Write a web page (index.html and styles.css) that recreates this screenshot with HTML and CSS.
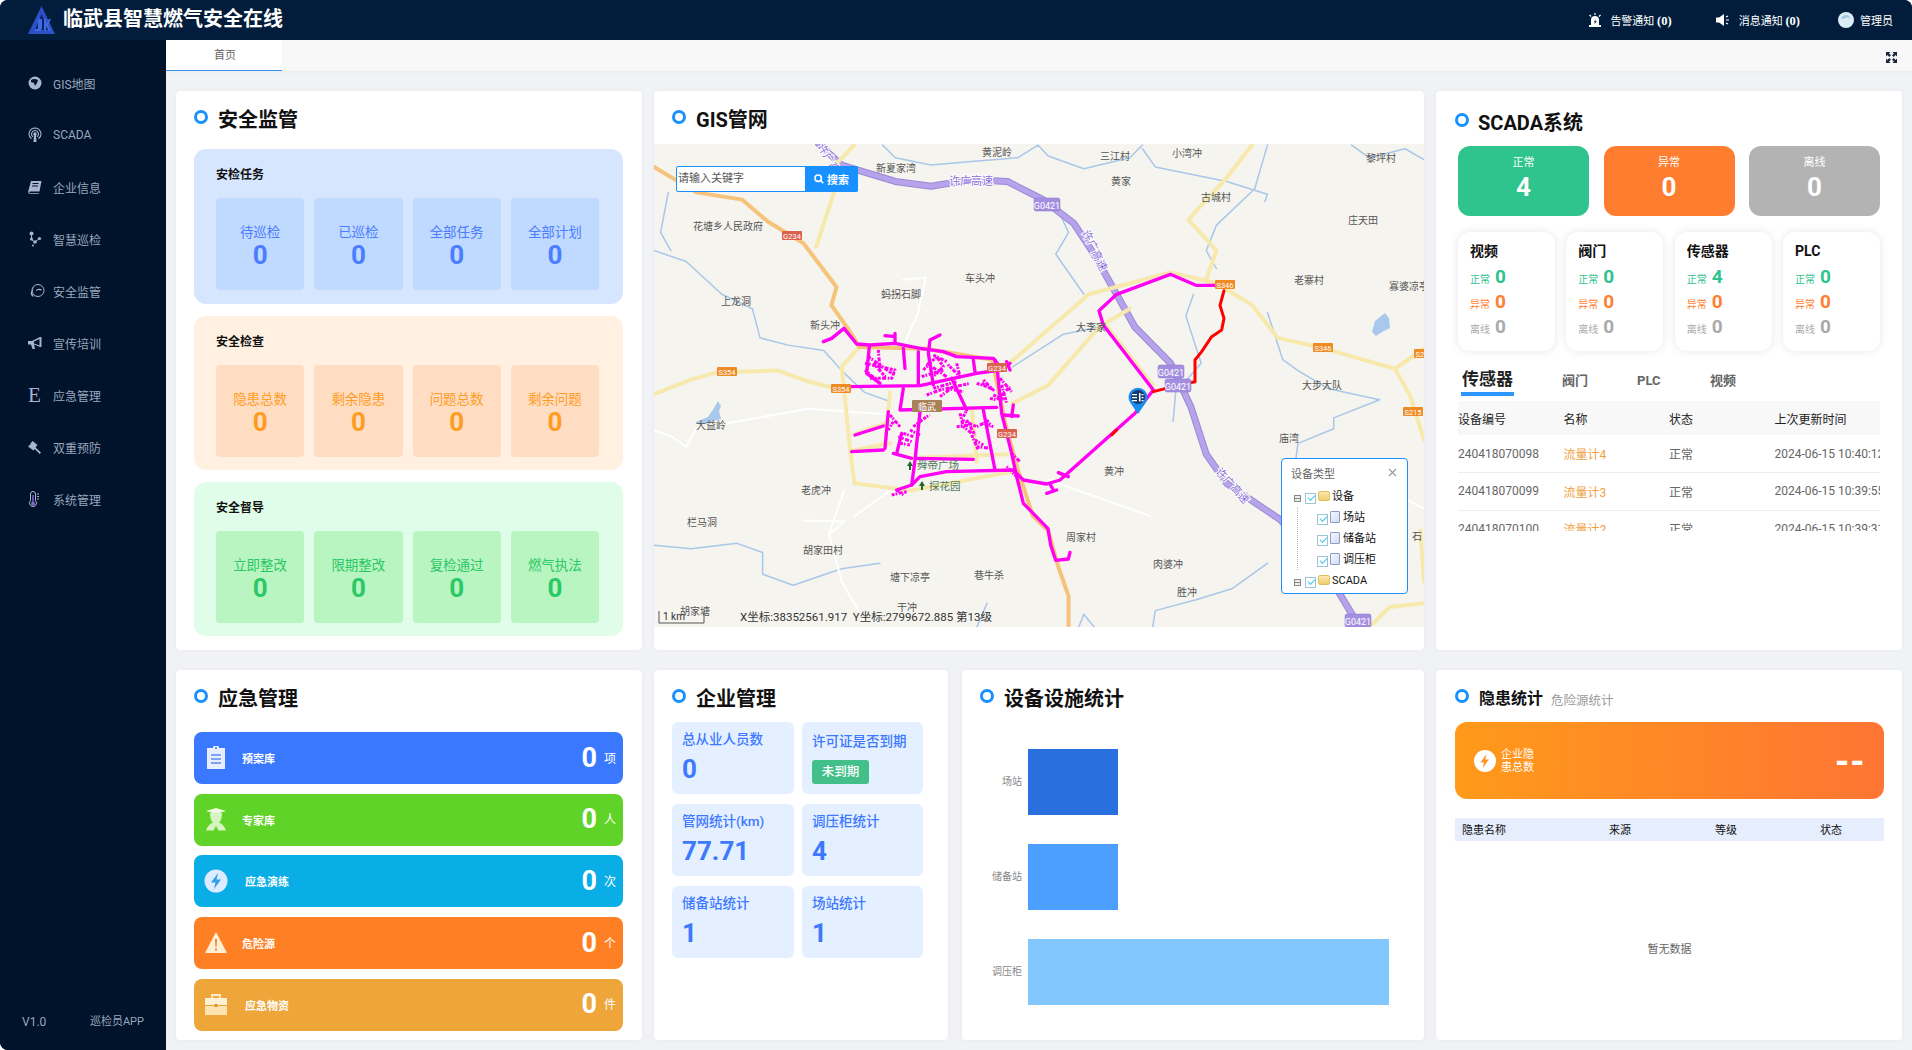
FILE: index.html
```html
<!DOCTYPE html>
<html lang="zh-CN">
<head>
<meta charset="utf-8">
<title>临武县智慧燃气安全在线</title>
<link rel="stylesheet" href="styles.css">
</head>
<body>
<div class="app">
  <header class="topbar">
    <svg class="logo" viewBox="0 0 27 28"><path d="M13.5 0 27 28H0Z" fill="#2b50c8"/><path d="M13.5 8 20 24H7Z" fill="#0d2660"/><path d="M10 13h4v9q0 3-4 3H7v-2h2q1 0 1-1ZM16 13h2v5l3-5h2l-3 6 3 6h-2l-3-5v5h-2Z" fill="#3f6ae6"/></svg>
    <h1 class="brand">临武县智慧燃气安全在线</h1>
    <div class="top-right">
      <div class="top-item">
        <svg class="top-icon" viewBox="0 0 14 14"><path d="M3 13V7a4 4 0 0 1 8 0v6Z" fill="#fff"/><path d="M7.8 6 5.8 9.200h1.400L6.400 11.500 8.800 8.300H7.200Z" fill="#021d3b"/><rect x="1" y="12" width="12" height="2" fill="#fff"/><path d="M7 0v2M1.500 2 3 3.500M12.500 2 11 3.500" stroke="#fff" stroke-width="1.200"/></svg>
        <span>告警通知 <b class="count">(0)</b></span>
      </div>
      <div class="top-item top-item-msg">
        <svg class="top-icon top-icon-wide" viewBox="0 0 15 14"><path d="M0 4.500h3L8 1v12L3 9.500H0Z" fill="#fff"/><path d="M10 4 12 3M10 7h3M10 10 12 11" stroke="#fff" stroke-width="1.200"/></svg>
        <span>消息通知 <b class="count">(0)</b></span>
      </div>
      <div class="top-item top-item-user">
        <svg class="avatar" viewBox="0 0 16 16"><circle cx="8" cy="8" r="8" fill="#dcecf6"/><path d="M3.500 7a4.500 4 0 0 1 9 0q-2-2.500-4-1.500T3.500 7Z" fill="#9fc8e4"/></svg>
        <span>管理员</span>
      </div>
    </div>
  </header>

  <div class="body-row">
    <aside class="sidebar">
      <nav class="menu">
        <a class="menu-item"><svg class="menu-icon" viewBox="0 0 14 14"><circle cx="7" cy="7" r="6.500"/><path d="M3 4q3-2 7 0l-1 3-2 3-1-3-3-1Z" class="cut"/></svg>GIS地图</a>
        <a class="menu-item"><svg class="menu-icon" viewBox="0 0 14 16"><path d="M7 1a6 6 0 0 0-3.500 10.800M7 1a6 6 0 0 1 3.500 10.800M7 3.500a3.500 3.500 0 0 0-2 6.300M7 3.500a3.500 3.500 0 0 1 2 6.300" fill="none" stroke="#a8b4d0" stroke-width="1.100"/><circle cx="7" cy="7" r="1.800"/><path d="M6 8h2l.5 7h-3Z"/></svg>SCADA</a>
        <a class="menu-item"><svg class="menu-icon" viewBox="0 0 14 14"><path d="M3 1h10.500L11.500 11.500H2.500Q1 11.500 1.300 13H11l-.3.800H1.500Q-.2 13.500.3 11Z"/><path d="M4.500 3.500h6M4 6h6" stroke="#00132a" stroke-width="1"/></svg>企业信息</a>
        <a class="menu-item"><svg class="menu-icon" viewBox="0 0 14 16"><circle cx="3.500" cy="2.500" r="2"/><circle cx="3.500" cy="8" r="1.600"/><circle cx="7" cy="11" r="1.800"/><circle cx="11.500" cy="7.500" r="1.600"/><circle cx="5" cy="14.500" r="1"/><path d="M3.500 4v3M4 9l2 1.500M8 10l3-2" stroke="#a8b4d0" fill="none"/></svg>智慧巡检</a>
        <a class="menu-item"><svg class="menu-icon menu-icon-earth" viewBox="0 0 16 16"><circle cx="9" cy="7.500" r="6" fill="none" stroke="#a8b4d0" stroke-width="1"/><path d="M5 3 2 9q-1 4 3 5l-2-4ZM7 7q3-2 6-.5l-1 1q-3-1-5 .5Z"/></svg>安全监管</a>
        <a class="menu-item"><svg class="menu-icon" viewBox="0 0 14 14"><path d="M0 5h4l8-4h1.500v10H12L6 8.500l1 4.500H4.500L3 8.500H0ZM6 5.500v2l5.500 2V3Z" fill-rule="evenodd"/></svg>宣传培训</a>
        <a class="menu-item"><span class="menu-letter">E</span>应急管理</a>
        <a class="menu-item"><svg class="menu-icon" viewBox="0 0 14 14"><path d="M4.500 1 9.500 5 7.500 7.500 8 8l5 4.500-1.300 1.500L6.800 9 5.500 10.500 0 6.500 1.500 5l.8-.2.200-1.300Z"/></svg>双重预防</a>
        <a class="menu-item"><svg class="menu-icon" viewBox="0 0 14 16"><path d="M5 .5a2.500 2.500 0 0 1 2.500 2.500v6.700a3.500 3.500 0 1 1-5 0V3A2.500 2.500 0 0 1 5 .5Z" fill="none" stroke="#a8b4d0" stroke-width="1"/><path d="M4.300 4h1.400v7a2 2 0 1 1-1.400 0Z" fill="#8a6ad0"/><path d="M9 3h2M9 5.500h2M9 8h2" stroke="#a8b4d0"/></svg>系统管理</a>
      </nav>
      <div class="side-foot"><span>V1.0</span><span class="side-app">巡检员APP</span></div>
    </aside>

    <div class="main">
      <div class="tabs-bar">
        <div class="tab-active">首页</div>
        <svg class="expand" viewBox="0 0 11 11"><path d="M0 0h4.500L3.100 1.400 5 3.300 3.300 5 1.400 3.100 0 4.500ZM11 0v4.500L9.600 3.100 7.700 5 6 3.300 7.900 1.400 6.500 0ZM0 11V6.500l1.400 1.400L3.300 6 5 7.700 3.100 9.600 4.500 11ZM11 11H6.500l1.400-1.400L6 7.700 7.700 6l1.900 1.900L11 6.500Z" fill="#1b2740"/></svg>
      </div>

      <div class="content">
        <div class="row row-top">
          <section class="card card-safety">
            <div class="head"><i class="dot"></i><h2>安全监管</h2></div>
            <div class="panel panel-blue">
              <h3>安检任务</h3>
              <div class="tiles">
                <div class="tile"><span>待巡检</span><b>0</b></div>
                <div class="tile"><span>已巡检</span><b>0</b></div>
                <div class="tile"><span>全部任务</span><b>0</b></div>
                <div class="tile"><span>全部计划</span><b>0</b></div>
              </div>
            </div>
            <div class="panel panel-orange">
              <h3>安全检查</h3>
              <div class="tiles">
                <div class="tile"><span>隐患总数</span><b>0</b></div>
                <div class="tile"><span>剩余隐患</span><b>0</b></div>
                <div class="tile"><span>问题总数</span><b>0</b></div>
                <div class="tile"><span>剩余问题</span><b>0</b></div>
              </div>
            </div>
            <div class="panel panel-green">
              <h3>安全督导</h3>
              <div class="tiles">
                <div class="tile"><span>立即整改</span><b>0</b></div>
                <div class="tile"><span>限期整改</span><b>0</b></div>
                <div class="tile"><span>复检通过</span><b>0</b></div>
                <div class="tile"><span>燃气执法</span><b>0</b></div>
              </div>
            </div>
          </section>

          <section class="card card-gis">
            <div class="head head-gis"><i class="dot"></i><h2>GIS管网</h2></div>
            <div class="map">
              <svg class="map-layer map-roads" viewBox="27 177 1510 1328" preserveAspectRatio="none">
                <g class="river">
                  <path d="M475 180 500 215 570 235 650 225 740 215 780 180 800 210 870 245 960 215 985 180"/>
                  <path d="M985 190 1010 240 1080 260 1150 280 1230 315 1225 335"/>
                  <path d="M27 470 90 500 160 590 220 630 235 710 290 730 360 745 395 800 440 860 490 885"/>
                  <path d="M55 310 40 420 60 470"/>
                  <path d="M27 1280 100 1290 190 1275 240 1300 240 1360 300 1390 395 1345 470 1330"/>
                  <path d="M1230 180 1205 300 1130 400 1110 470 1130 520"/>
                  <path d="M1085 590 1070 650 1100 780 1050 860 1045 940"/>
                  <path d="M1230 640 1260 770 1290 800 1350 850 1450 880 1360 930 1360 960 1290 1000 1285 1050"/>
                  <path d="M1005 1505 1010 1460 1090 1430 1160 1400 1230 1330"/>
                  <path d="M1395 180 1430 215 1500 190 1537 220"/>
                  <path d="M815 480 840 420 820 360M815 480 870 590"/>
                  <path d="M660 1505 680 1440M860 1505 870 1470 890 1505"/>
                  <path d="M730 790 830 700 900 680"/>
                </g>
                <g class="minor">
                  <path d="M515 550 560 545 545 640 520 720"/>
                  <path d="M320 1212 400 1215 370 1250 395 1380 440 1490"/>
                  <path d="M400 1130 370 1250M490 1130 420 1200"/>
                  <path d="M27 965 60 980 90 1010 110 960 330 905 480 920"/>
                  <path d="M800 1100 1000 1200"/>
                  <path d="M1420 1090 1537 1180"/>
                </g>
                <g class="highway-edge"><path d="M350 177 395 235 430 250 500 280 570 293 650 275 720 280 790 330 850 395 890 480 930 580 970 680 1040 780 1080 900 1110 1030 1150 1110 1255 1210 1340 1340 1400 1480 1420 1505"/></g>
                <g class="highway"><path d="M350 177 395 235 430 250 500 280 570 293 650 275 720 280 790 330 850 395 890 480 930 580 970 680 1040 780 1080 900 1110 1030 1150 1110 1255 1210 1340 1340 1400 1480 1420 1505"/></g>
                <g class="yellow">
                  <path d="M27 865 100 825 150 805 270 800 330 830 400 855"/>
                  <path d="M400 855 395 790 430 735"/>
                  <path d="M400 855 410 1000 420 1110 530 1130 740 1075"/>
                  <path d="M490 860 480 1000M650 905 660 1050M420 975 480 945M415 1020 490 1000M530 1040 720 1030"/>
                  <path d="M720 785 880 590 1040 530 1130 560 1200 620 1250 710 1330 735 1480 795 1510 870 1537 990"/>
                  <path d="M730 890 800 840 900 680 960 630"/>
                  <path d="M910 670 1005 840"/>
                  <path d="M1480 795 1537 740"/>
                  <path d="M1110 550 1130 470 1075 385 1150 270 1200 180"/>
                  <path d="M1430 1505 1470 1450 1537 1440"/>
                  <path d="M1530 1240 1537 1380"/>
                  <path d="M345 460 380 310 385 230 420 180"/>
                </g>
                <g class="orange-road">
                  <path d="M27 240 110 310 200 330 250 390 320 450 385 570 375 620 410 690 430 735 560 740 690 770 715 940 740 1070 770 1200 800 1240 820 1340 840 1420 840 1505"/>
                </g>
              </svg>
              <svg class="map-layer" viewBox="-498 -528 2310 1449">
                <g class="pipe">
                  <path d="M10 65 35 55 72 25 110 72 150 75 225 70 300 85 370 95 410 110 520 115 540 140"/>
                  <path d="M90 200 300 197 400 175 470 160 540 150 570 130"/>
                  <path d="M148 80 140 160 180 190M295 95 295 195M250 85 255 145M330 60 325 100 340 195M225 40 225 70M195 47 225 50M330 60 360 45"/>
                  <path d="M250 205 240 270 530 262"/>
                  <path d="M300 275 285 420 275 495"/>
                  <path d="M395 175 440 270M490 270 525 450"/>
                  <path d="M530 130 545 280 575 400 590 470 610 550 684 626 692 675 707 721 745 717 750 697"/>
                  <path d="M290 415 460 418"/>
                  <path d="M230 510 275 495 300 470 380 455 580 450 610 480 680 492 720 480 945 280 1000 210 850 15 837 -28 890 -77 1051 -137 1128 -104 1212 -104"/>
                  <path d="M105 345 190 318M95 395 190 390M205 275 195 385M220 400 275 415M245 340 230 400"/>
                  <path d="M680 520 710 510M715 458 745 470M690 492 700 510M550 285 595 288M580 255 575 290M460 120 465 155M525 120 530 150M560 125 570 150"/>
                </g>
                <g class="pipe pipe-dots">
                  <path d="M135 130 225 150 215 175 150 175M175 90 180 150M145 110 215 160M160 130 200 175M135 150 170 180"/>
                  <path d="M310 150 350 110 370 140 340 170M320 130 380 170M340 105 380 125M305 170 370 150"/>
                  <path d="M320 225 360 210 450 190M340 205 410 185M380 205 430 215M360 230 400 200"/>
                  <path d="M485 190 520 210 490 180M510 235 530 240 570 200M540 175 575 215M520 225 555 240M545 195 560 250"/>
                  <path d="M425 300 470 320 490 310 520 320M420 280 430 320 455 340M410 320 450 315M440 300 465 345M430 290 440 270"/>
                  <path d="M470 380 510 385M465 360 490 375M455 345 475 390M500 300 515 320"/>
                  <path d="M240 370 270 375M250 340 280 350M280 320 320 290 330 285M235 350 275 365M270 330 300 345M210 285 240 320M220 305 205 330"/>
                  <path d="M230 510 250 525M215 525 260 515M410 130 420 170 380 130M470 190 500 200"/>
                  <path d="M575 400 600 425M590 470 560 440"/>
                </g>
                <g class="pipe pipe-red">
                  <path d="M875 345 890 330M1000 215 1090 192 1125 185 1125 120 1145 95 1175 50 1205 30 1212 -5 1200 -44 1212 -88"/>
                </g>
              </svg>
              <svg class="map-layer map-text" viewBox="0 0 770 483">
                <path class="lake" d="M718 188l3-11 10-8 4 5 1 10-8 4-6 4ZM42 278l12-5 6-9 4-7 3 5-2 5 2 8-7 2-8 3-10 0Z"/>
                <g class="shield sh-p"><rect x="380" y="54" width="26" height="13" rx="2"/><text x="393" y="64.500">G0421</text></g>
                <g class="shield sh-p"><rect x="504" y="221" width="26" height="13" rx="2"/><text x="517" y="231.500">G0421</text></g>
                <g class="shield sh-p"><rect x="511" y="235" width="26" height="13" rx="2"/><text x="524" y="245.500">G0421</text></g>
                <g class="shield sh-p"><rect x="691" y="470" width="26" height="13" rx="2"/><text x="704" y="480.500">G0421</text></g>
                <g class="shield sh-r"><rect x="128" y="87" width="20" height="9" rx="1"/><text x="138" y="94.500">G234</text></g>
                <g class="shield sh-r"><rect x="343" y="285" width="20" height="9" rx="1"/><text x="353" y="292.500">G234</text></g>
                <g class="shield sh-r"><rect x="333" y="219" width="20" height="9" rx="1"/><text x="343" y="226.500">G234</text></g>
                <g class="shield sh-o"><rect x="63" y="223" width="20" height="9" rx="1"/><text x="73" y="230.500">S354</text></g>
                <g class="shield sh-o"><rect x="177" y="240" width="20" height="9" rx="1"/><text x="187" y="247.500">S354</text></g>
                <g class="shield sh-o"><rect x="561" y="136" width="20" height="9" rx="1"/><text x="571" y="143.500">S346</text></g>
                <g class="shield sh-o"><rect x="659" y="199" width="20" height="9" rx="1"/><text x="669" y="206.500">S346</text></g>
                <g class="shield sh-o"><rect x="749" y="263" width="20" height="9" rx="1"/><text x="759" y="270.500">S215</text></g>
                <g class="shield sh-o"><rect x="760" y="205" width="20" height="9" rx="1"/><text x="770" y="212.500">S215</text></g>
                <g class="shield sh-b"><rect x="258" y="256" width="30" height="12" rx="1"/><text x="273" y="265.500">临武</text></g>
                <text class="hw-label" x="295" y="41">许广高速</text>
                <text class="hw-label" transform="translate(428 88) rotate(65)">许广高速</text>
                <text class="hw-label" transform="translate(561 328) rotate(48)">许广高速</text>
                <text class="hw-label" transform="translate(163 2) rotate(60)">许广高速</text>
                <g class="place">
                  <text x="328" y="12">黄泥岭</text><text x="446" y="16">三江村</text><text x="518" y="13">小湾冲</text><text x="712" y="18">黎坪村</text>
                  <text x="222" y="28">新夏家湾</text><text x="457" y="41">黄家</text><text x="547" y="57">古城村</text><text x="694" y="80">庄天田</text>
                  <text x="39" y="86">花塘乡人民政府</text><text x="311" y="138">车头冲</text><text x="227" y="154">蚂拐石脚</text><text x="640" y="140">老寨村</text>
                  <text x="735" y="146">寡婆凉亭</text><text x="67" y="161">上龙洞</text><text x="156" y="185">新头冲</text><text x="422" y="187">大李家</text>
                  <text x="648" y="245">大步大队</text><text x="42" y="285">大益岭</text><text x="625" y="298">庙湾</text><text x="450" y="331">黄冲</text>
                  <text x="147" y="350">老虎冲</text><text x="33" y="382">栏马洞</text><text x="412" y="397">周家村</text><text x="149" y="410">胡家田村</text>
                  <text x="236" y="437">塘下凉亭</text><text x="320" y="435">巷牛杀</text><text x="499" y="424">肉婆冲</text><text x="523" y="452">胜冲</text>
                  <text x="243" y="467">干冲</text><text x="26" y="471">胡家塘</text><text x="758" y="396">石</text>
                </g>
                <g class="park"><text x="263" y="325">舜帝广场</text><text x="275" y="346">探花园</text><path d="M256 317l3 5h-2v4h-2v-4h-2ZM268 337l3 5h-2v4h-2v-4h-2Z"/></g>
                <path class="scale" d="M5 467v12h45v-12"/>
                <text class="scale-text" x="9" y="476">1 km</text>
                <text class="coord" x="86" y="477">X坐标:38352561.917 &#160;Y坐标:2799672.885 第13级</text>
                <path class="pin" d="M484 270l-7.500-11a9.500 9.500 0 1 1 15 0Z"/>
                <circle class="pin-in" cx="484" cy="253" r="7"/>
                <path class="pin-mark" d="M478 250h5v1.200h-5ZM478 253h5v1.200h-5ZM478 256h5v1.200h-5ZM485 249h1.500v8.500H485ZM487.500 250h2v1.200h-2ZM487.500 253h2v1.200h-2ZM487.500 256h2v1.200h-2Z"/>
              </svg>
              <div class="search">
                <span class="search-input">请输入关键字</span>
                <span class="search-btn"><svg class="search-icon" viewBox="0 0 10 10"><circle cx="4.200" cy="4.200" r="3.200" fill="none" stroke="#fff" stroke-width="1.600"/><path d="M6.500 6.500 9.300 9.300" stroke="#fff" stroke-width="1.600"/></svg>搜索</span>
              </div>
              <div class="tree">
                <div class="tree-head"><span>设备类型</span><svg class="tree-close" viewBox="0 0 9 9"><path d="M1 1 8 8M8 1 1 8" stroke="#999" stroke-width="1.100"/></svg></div>
                <div class="tree-row"><i class="toggle"></i><i class="check"></i><i class="folder"></i>设备</div>
                <div class="tree-kids">
                  <div class="tree-row"><i class="check"></i><i class="file"></i>场站</div>
                  <div class="tree-row"><i class="check"></i><i class="file"></i>储备站</div>
                  <div class="tree-row"><i class="check"></i><i class="file"></i>调压柜</div>
                </div>
                <div class="tree-row"><i class="toggle"></i><i class="check"></i><i class="folder"></i>SCADA</div>
              </div>
            </div>
          </section>

          <section class="card card-scada">
            <div class="head head-scada"><i class="dot"></i><h2>SCADA系统</h2></div>
            <div class="status-row">
              <div class="status st-green"><span>正常</span><b>4</b></div>
              <div class="status st-orange"><span>异常</span><b>0</b></div>
              <div class="status st-gray"><span>离线</span><b>0</b></div>
            </div>
            <div class="kinds">
              <div class="kind"><h4>视频</h4><p class="k-ok">正常<b>0</b></p><p class="k-bad">异常<b>0</b></p><p class="k-off">离线<b>0</b></p></div>
              <div class="kind"><h4>阀门</h4><p class="k-ok">正常<b>0</b></p><p class="k-bad">异常<b>0</b></p><p class="k-off">离线<b>0</b></p></div>
              <div class="kind"><h4>传感器</h4><p class="k-ok">正常<b>4</b></p><p class="k-bad">异常<b>0</b></p><p class="k-off">离线<b>0</b></p></div>
              <div class="kind"><h4>PLC</h4><p class="k-ok">正常<b>0</b></p><p class="k-bad">异常<b>0</b></p><p class="k-off">离线<b>0</b></p></div>
            </div>
            <div class="s-tabs">
              <span class="s-tab s-tab-on">传感器</span>
              <span class="s-tab s-tab-valve">阀门</span>
              <span class="s-tab s-tab-plc">PLC</span>
              <span class="s-tab s-tab-video">视频</span>
            </div>
            <div class="s-table-wrap">
              <table class="s-table">
                <thead><tr><th>设备编号</th><th>名称</th><th>状态</th><th>上次更新时间</th></tr></thead>
                <tbody>
                  <tr><td>240418070098</td><td class="name">流量计4</td><td>正常</td><td>2024-06-15 10:40:12</td></tr>
                  <tr><td>240418070099</td><td class="name">流量计3</td><td>正常</td><td>2024-06-15 10:39:55</td></tr>
                  <tr><td>240418070100</td><td class="name">流量计2</td><td>正常</td><td>2024-06-15 10:39:31</td></tr>
                </tbody>
              </table>
            </div>
          </section>
        </div>

        <div class="row row-bottom">
          <section class="card card-emergency">
            <div class="head"><i class="dot"></i><h2>应急管理</h2></div>
            <div class="bars">
              <div class="bar bar-blue">
                <svg class="bar-icon" viewBox="0 0 24 26"><path d="M3 3h18v21H3Z" fill="#e6eeff"/><rect x="9" y="1" width="6" height="4" rx="1" fill="#e6eeff"/><circle cx="12" cy="3" r="1" fill="#3a78ff"/><path d="M7 10h10M7 14h10M7 18h10" stroke="#5b8cf0" stroke-width="1.600"/></svg>
                <span class="bar-label">预案库</span><b>0</b><em>项</em>
              </div>
              <div class="bar bar-green">
                <svg class="bar-icon" viewBox="0 0 24 26"><path d="M2 4 12 1l10 3-10 3Z" fill="#eefbe0"/><path d="M6 6h12q0 7-3 9.500 5 2 7 8H14.500L12 19l-2.500 4.500H2q2-6 7-8Q6 13 6 6Z" fill="#d6f5c0"/></svg>
                <span class="bar-label">专家库</span><b>0</b><em>人</em>
              </div>
              <div class="bar bar-sky">
                <svg class="bar-icon" viewBox="0 0 24 26"><circle cx="12" cy="13" r="11.500" fill="#dcebff"/><path d="M14 5 7 14.500h4.500L10 21l7-9.500h-4.500Z" fill="#2c9fe8"/></svg>
                <span class="bar-label bar-label-in">应急演练</span><b>0</b><em>次</em>
              </div>
              <div class="bar bar-orange">
                <svg class="bar-icon" viewBox="0 0 24 26"><path d="M12 2 23 23H1Z" fill="#ffefd2"/><path d="M11 9h2l-.4 8h-1.200ZM11 18.500h2v2h-2Z" fill="#f0813a"/></svg>
                <span class="bar-label">危险源</span><b>0</b><em>个</em>
              </div>
              <div class="bar bar-amber">
                <svg class="bar-icon" viewBox="0 0 24 26"><path d="M8 6V3h8v3" fill="none" stroke="#fdeecb" stroke-width="1.800"/><path d="M1 6h22v7H1Z" fill="#fff2d4"/><path d="M1 14h22v9H1Z" fill="#fde3b0"/><rect x="10.500" y="12" width="3" height="3" fill="#d99030"/></svg>
                <span class="bar-label bar-label-in">应急物资</span><b>0</b><em>件</em>
              </div>
            </div>
          </section>

          <section class="card card-company">
            <div class="head head-short"><i class="dot"></i><h2>企业管理</h2></div>
            <div class="co-grid">
              <div class="co-tile"><span>总从业人员数</span><b>0</b></div>
              <div class="co-tile"><span class="co-label-low">许可证是否到期</span><em class="tag">未到期</em></div>
              <div class="co-tile"><span>管网统计(km)</span><b>77.71</b></div>
              <div class="co-tile"><span>调压柜统计</span><b>4</b></div>
              <div class="co-tile"><span>储备站统计</span><b>1</b></div>
              <div class="co-tile"><span>场站统计</span><b>1</b></div>
            </div>
          </section>

          <section class="card card-device">
            <div class="head head-short"><i class="dot"></i><h2>设备设施统计</h2></div>
            <div class="chart">
              <span class="chart-label">场站</span><div class="chart-track"><div class="chart-bar c1" style="width:25%"></div></div>
              <span class="chart-label">储备站</span><div class="chart-track"><div class="chart-bar c2" style="width:25%"></div></div>
              <span class="chart-label">调压柜</span><div class="chart-track"><div class="chart-bar c3" style="width:100%"></div></div>
            </div>
          </section>

          <section class="card card-risk">
            <div class="head head-short head-risk"><i class="dot"></i><h2>隐患统计</h2><span class="sub-title">危险源统计</span></div>
            <div class="banner">
              <svg class="banner-icon" viewBox="0 0 22 22"><circle cx="11" cy="11" r="11" fill="#fff"/><path d="M12.500 4 6.500 12.500H10L8.800 18l6-8.500h-3.500Z" fill="#ff9320"/></svg>
              <span class="banner-text">企业隐患总数</span>
              <b class="banner-num">--</b>
            </div>
            <div class="risk-head"><span>隐患名称</span><span>来源</span><span>等级</span><span>状态</span></div>
            <div class="risk-empty">暂无数据</div>
          </section>
        </div>
      </div>
    </div>
  </div>
</div>
</body>
</html>
```

FILE: styles.css
```css
* { box-sizing: border-box; }
html, body { margin: 0; height: 100%; background: #fff; }
body { font-family: Roboto, "Noto Sans CJK SC", sans-serif; font-size: 12px; color: #333; overflow: hidden; }
h1, h2, h3, h4, p { margin: 0; }
em { font-style: normal; }
i { display: block; font-style: normal; }

.app { width: 1912px; height: 1050px; display: flex; flex-direction: column; border-radius: 8px 8px 0 8px; overflow: hidden; background: #00132a; }

/* top bar */
.topbar { height: 40px; flex: none; display: flex; align-items: center; padding: 0 19px 0 28px; background: #021d3b; color: #fff; }
.logo { width: 27px; height: 28px; margin-right: 8px; }
.brand { font-size: 20px; font-weight: 700; line-height: 28px; letter-spacing: 0; margin-top: -3px; }
.top-right { margin-left: auto; display: flex; align-items: center; font-size: 11px; }
.top-item { display: flex; align-items: center; }
.top-item-msg { margin-left: 44px; }
.top-item-user { margin-left: 38px; }
.top-icon { width: 14px; height: 14px; margin-right: 8px; }
.top-icon-wide { width: 15px; }
.avatar { width: 16px; height: 16px; margin-right: 6px; }
.count { font-family: "Liberation Serif", serif; font-weight: 700; font-size: 12.500px; }

/* layout */
.body-row { flex: 1; display: flex; min-height: 0; }
.sidebar { width: 166px; flex: none; display: flex; flex-direction: column; background: #00132a; color: #9aa6bf; }
.menu { padding-top: 17px; display: flex; flex-direction: column; }
.menu-item { height: 52px; display: flex; align-items: center; padding-left: 28px; font-size: 12px; }
.menu-icon { width: 14px; height: 16px; margin-right: 11px; flex: none; fill: #a8b4d0; }
.menu-icon .cut { fill: #00132a; }
.menu-icon-earth { width: 16px; height: 16px; margin-left: 1px; margin-right: 8px; }
.menu-letter { width: 14px; margin-right: 11px; font-family: "Liberation Serif", serif; font-size: 21px; line-height: 24px; color: #a8b4d0; }
.side-foot { margin-top: auto; display: flex; justify-content: space-between; padding: 0 22px 20px; line-height: 16px; }
.side-app { font-size: 11px; }
.main { flex: 1; min-width: 0; display: flex; flex-direction: column; background: #f0f2f5; }
.tabs-bar { height: 33px; flex: none; display: flex; align-items: stretch; justify-content: space-between; padding-right: 15px; background: #f8f8f8; border-bottom: 2px solid #eceef5; }
.tab-active { width: 116px; background: #fff; border-bottom: 1px solid #3a8ee6; text-align: center; font-size: 11px; line-height: 32px; padding-left: 2px; color: #666; }
.expand { width: 11px; height: 11px; margin-top: 12px; }
.content { flex: 1; min-height: 0; padding: 18px 10px 10px; display: flex; flex-direction: column; gap: 20px; }
.row { display: flex; justify-content: space-between; }
.row-top { height: 559px; flex: none; }
.row-bottom { height: 370px; flex: none; justify-content: flex-start; gap: 12px; }

/* card */
.card { background: #fff; border-radius: 4px; box-shadow: 0 0 4px rgba(0, 20, 60, .04); display: flex; flex-direction: column; overflow: hidden; }
.card-safety, .card-emergency { width: 466px; padding: 0 19px 0 18px; }
.card-gis { width: 770px; }
.card-scada { width: 466px; padding: 0 22px; }
.card-company { width: 294px; padding: 0 25px 0 18px; }
.card-device { width: 462px; margin-left: 2px; padding: 0 18px; }
.card-risk { width: 466px; padding: 0 18px 0 19px; }
.head { height: 58px; flex: none; display: flex; align-items: flex-start; padding-top: 16px; }
.head h2 { font-size: 20px; font-weight: 700; line-height: 26px; color: #111; }
.dot { width: 14px; height: 14px; flex: none; margin: 3px 10px 0 0; border: 3px solid #1890ff; border-radius: 50%; }
.head-gis { height: 53px; padding-left: 18px; }
.head-short { height: 52px; }
.head-scada { height: 55px; padding-top: 19px; margin-left: -3px; }
.head-scada .dot { margin-top: 3px; margin-right: 9px; }
.head-risk h2 { font-size: 16px; }
.sub-title { margin-left: 8px; font-size: 12.500px; line-height: 30px; color: #999; }

/* safety panels */
.panel { height: 155px; flex: none; margin-bottom: 12px; padding: 18px 24px 0 22px; border-radius: 12px; }
.panel h3 { font-size: 12px; font-weight: 700; line-height: 16px; margin-bottom: 15px; color: #111; }
.tiles { display: grid; grid-template-columns: repeat(4, 1fr); gap: 10px; }
.tile { height: 92px; border-radius: 4px; padding-top: 2px; display: flex; flex-direction: column; align-items: center; justify-content: center; }
.tile span { font-size: 13.500px; line-height: 20px; }
.tile b { font-size: 26px; line-height: 27px; font-weight: 700; }
.panel-blue { background: #d6e6ff; }
.panel-blue .tile { background: #c0d9ff; color: #4a7dff; }
.panel-orange { background: #fff0e2; height: 154px; }
.panel-orange .tile { background: #ffddc2; color: #ff9c1f; }
.panel-green { background: #e0fdea; height: 154px; margin-bottom: 0; }
.panel-green .tile { background: #b9f5c1; color: #2bc866; }

/* map */
.map { position: relative; height: 483px; flex: none; overflow: hidden; background: #f5f4ef; }
.map-layer { position: absolute; inset: 0; width: 770px; height: 483px; }
.map-roads path { vector-effect: non-scaling-stroke; fill: none; stroke-linejoin: round; stroke-linecap: round; }
.river path { stroke: #a9c7e8; stroke-width: 1.500; }
.minor path { stroke: #fff; stroke-width: 2; }
.highway-edge path { stroke: #9a88d2; stroke-width: 7; }
.highway path { stroke: #b7a3ec; stroke-width: 5; }
.yellow path { stroke: #f7e9ac; stroke-width: 4; }
.orange-road path { stroke: #f6c37a; stroke-width: 4; }
.pipe { fill: none; stroke: #ff00f2; stroke-width: 10; stroke-linejoin: round; stroke-linecap: round; }
.pipe-dots { stroke-width: 9; stroke-dasharray: 9 3 5 5 12 4; stroke-linecap: butt; }
.pipe-red { stroke: #f00; stroke-width: 9; }
.map-text text { font-family: Roboto, "Noto Sans CJK SC", sans-serif; }
.place text { font-size: 10px; fill: #555; }
.park text { font-size: 10.500px; fill: #4f7a62; }
.park path { fill: #1d6b2a; }
.lake { fill: #a9c9ec; }
.shield text { font-size: 7.500px; fill: #fff; text-anchor: middle; }
.sh-p rect { fill: #a48ee0; stroke: #8a77cc; stroke-width: .5px; }
.sh-p text { font-size: 9px; }
.sh-r rect { fill: #d9624f; }
.sh-o rect { fill: #f08a24; }
.sh-b rect { fill: #a8805a; }
.sh-b text { font-size: 9px; }
.hw-label { font-size: 11px; fill: #8a6fd8; stroke: #fff; stroke-width: 2px; paint-order: stroke; }
.scale { fill: none; stroke: #555; stroke-width: 1px; }
.scale-text { font-size: 10px; fill: #333; }
.coord { font-size: 11.500px; fill: #333; }
.pin { fill: #1a8cf0; }
.pin-in { fill: #173a6e; }
.pin-mark { fill: #fff; }
.search { position: absolute; left: 22px; top: 22px; width: 182px; height: 26px; display: flex; border: 1px solid #1890ff; border-radius: 2px; background: #fff; }
.search-input { width: 129px; padding-left: 1px; font-size: 11px; line-height: 24px; color: #555; }
.search-btn { flex: 1; display: flex; align-items: center; justify-content: center; gap: 3px; margin: -1px; border-radius: 0 2px 2px 0; background: #1890ff; color: #fff; font-size: 11px; font-weight: 700; }
.search-icon { width: 10px; height: 10px; }
.tree { position: absolute; right: 16px; top: 314px; width: 127px; height: 136px; padding: 0 9px; background: #fff; border: 1px solid #1890ff; border-radius: 4px; font-size: 11px; color: #111; }
.tree-head { height: 27px; display: flex; align-items: center; justify-content: space-between; color: #666; font-size: 11px; padding-right: 1px; }
.tree-close { width: 9px; height: 9px; }
.tree-row { height: 21px; display: flex; align-items: center; line-height: 16px; }
.tree-kids { margin-left: 6px; padding-left: 19px; border-left: 1px dotted #bbb; height: 63px; }
.toggle { width: 7px; height: 7px; margin: 3px 4px 0 3px; border: 1px solid #888; background: linear-gradient(#888, #888) center/5px 1px no-repeat, #eee; }
.check { position: relative; width: 11px; height: 11px; margin: 3px 2px 0 0; border: 1px solid #9cc4d8; background: #fff; }
.check::after { content: ""; position: absolute; left: 2px; top: 1px; width: 6px; height: 3px; border-left: 1.500px solid #3dc8ee; border-bottom: 1.500px solid #3dc8ee; transform: rotate(-45deg); }
.folder { width: 12px; height: 10px; margin: -2px 2px 0 0; border-radius: 2px; background: linear-gradient(#fbe9b0, #efce70); border: 1px solid #e0c060; }
.file { width: 10px; height: 12px; margin: -2px 3px 0 0; border-radius: 1px; background: linear-gradient(135deg, #f4f7fd, #cfdcf4); border: 1px solid #8e9ac8; }

/* scada */
.status-row { display: grid; grid-template-columns: repeat(3, 131px); justify-content: space-between; }
.status { height: 70px; border-radius: 12px; color: #fff; display: flex; flex-direction: column; align-items: center; padding-top: 8px; }
.status span { font-size: 11px; line-height: 18px; }
.status b { font-size: 26px; line-height: 30px; margin-top: 0; }
.st-green { background: #2fc48d; }
.st-orange { background: #ff7d2f; }
.st-gray { background: #b3b3b3; }
.kinds { margin-top: 16px; display: grid; grid-template-columns: repeat(4, 97px); justify-content: space-between; }
.kind { height: 119px; padding: 10px 12px 0; border-radius: 12px; background: #fff; box-shadow: 0 0 8px rgba(0, 0, 0, .1); }
.kind h4 { font-size: 14px; font-weight: 700; line-height: 19px; margin-bottom: 4px; color: #111; }
.kind p { height: 25px; display: flex; align-items: baseline; font-size: 10px; line-height: 24px; }
.kind p b { margin-left: 5px; font-size: 19px; font-weight: 700; }
.k-ok { color: #2fc48d; }
.k-bad { color: #ff8030; }
.k-off { color: #aaa; }
.s-tabs { height: 50px; flex: none; position: relative; display: flex; align-items: center; color: #666; font-size: 13px; font-weight: 700; }
.s-tab { position: absolute; top: 19px; line-height: 22px; }
.s-tab-on { left: 3px; top: 15px; height: 30px; padding: 0 1px; font-size: 17px; color: #222; line-height: 26px; border-bottom: 4px solid #2e96ff; }
.s-tab-valve { left: 104px; }
.s-tab-plc { left: 179px; }
.s-tab-video { left: 252px; }
.s-table-wrap { height: 130px; overflow: hidden; }
.s-table { width: 422px; table-layout: fixed; border-collapse: collapse; font-size: 12px; }
.s-table th { height: 34px; background: #f8f8f8; font-weight: 400; color: #222; text-align: left; padding: 0; }
.s-table td { height: 37.500px; padding: 0; color: #666; white-space: nowrap; overflow: hidden; border-bottom: 1px solid #ebeef5; }
.s-table td.name { color: #f0a040; }

/* emergency */
.bars { margin-top: 4px; display: flex; flex-direction: column; gap: 9.700px; }
.bar { height: 52px; display: flex; align-items: center; padding: 0 7px 0 10px; border-radius: 8px; color: #fff; }
.bar-icon { width: 24px; height: 26px; margin-right: 14px; flex: none; }
.bar-label { font-size: 11px; font-weight: 700; }
.bar-label-in { margin-left: 3px; }
.bar b { margin-left: auto; font-size: 27px; font-weight: 700; margin-top: -1px; }
.bar em { margin-left: 7px; font-size: 12px; margin-top: -2px; }
.bar-blue { background: #3a78ff; }
.bar-green { background: #5fd327; }
.bar-sky { background: #0aaee6; }
.bar-orange { background: #ff8024; }
.bar-amber { background: #eea53a; }

/* company */
.co-grid { display: grid; grid-template-columns: 122px 121px; grid-auto-rows: 72px; gap: 10px 8px; }
.co-tile { padding: 7px 10px 0; border-radius: 6px; background: #e4f0ff; color: #3d78ff; display: flex; flex-direction: column; align-items: flex-start; }
.co-tile span { font-size: 13.500px; line-height: 20px; white-space: nowrap; font-weight: 500; }
.co-label-low { margin-top: 2px; }
.co-tile b { margin-top: 5px; font-size: 26px; line-height: 30px; font-weight: 700; }
.tag { margin-top: 9px; width: 57px; height: 24px; border-radius: 3px; background: #43bf8a; color: #fff; font-size: 12.500px; font-weight: 500; line-height: 24px; text-align: center; }

/* chart */
.chart { display: grid; grid-template-columns: 42px 361px; grid-auto-rows: 66px; row-gap: 29px; column-gap: 6px; padding-top: 27px; align-items: center; }
.chart-label { font-size: 10px; color: #888; text-align: right; white-space: nowrap; padding-bottom: 4px; }
.chart-track { height: 66px; }
.chart-bar { height: 66px; }
.c1 { background: #2970de; }
.c2 { background: #4d9fff; }
.c3 { background: #82c8ff; }

/* risk */
.banner { height: 77px; flex: none; display: flex; align-items: center; padding: 0 19px 0 19px; border-radius: 12px; background: linear-gradient(90deg, #ff9a1a, #ff7534); color: #fff; }
.banner-icon { width: 22px; height: 22px; margin-right: 5px; }
.banner-text { width: 34px; font-size: 11px; line-height: 13px; }
.banner-num { margin-left: auto; font-size: 34px; font-weight: 900; line-height: 34px; }
.risk-head { margin-top: 19px; height: 23px; flex: none; display: grid; grid-template-columns: 147px 106px 105px 1fr; padding: 0 0 2px 7px; align-items: center; background: #e6edfc; color: #111; font-size: 11px; }
.risk-empty { flex: 1; display: flex; align-items: center; justify-content: center; padding-top: 14px; font-size: 11px; color: #666; }
```
